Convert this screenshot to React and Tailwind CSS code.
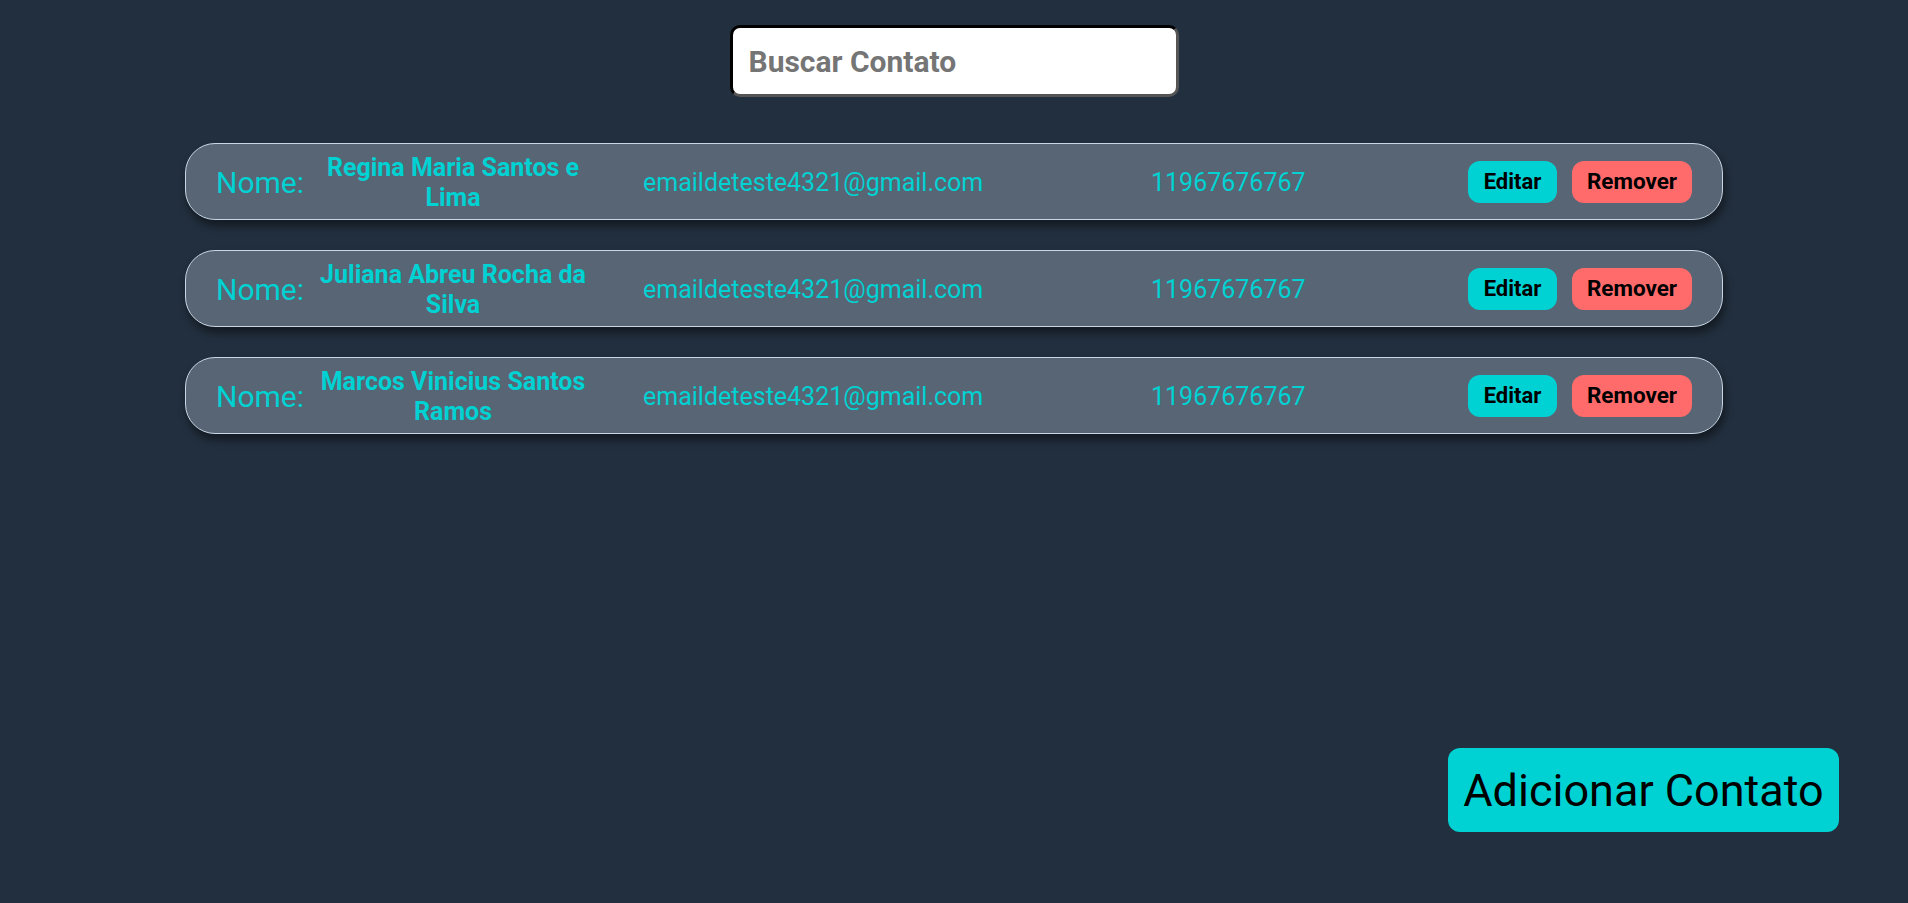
import React from "react";

const contacts = [
  { name: "Regina Maria Santos e Lima", email: "emaildeteste4321@gmail.com", phone: "11967676767" },
  { name: "Juliana Abreu Rocha da Silva", email: "emaildeteste4321@gmail.com", phone: "11967676767" },
  { name: "Marcos Vinicius Santos Ramos", email: "emaildeteste4321@gmail.com", phone: "11967676767" },
];

function ContactCard({ c }) {
  return (
    <div className="w-[1538px] h-[77px] flex items-center pl-[30px] pr-[30px] rounded-[30px] border border-[#c8d6e5] bg-[#576574] shadow-[2px_6px_8px_rgba(0,0,0,0.45)] text-[#00d2d3]">
      <span className="w-[88px] pt-[2px] text-[30px] font-normal leading-none">Nome:</span>
      <span className="w-[298px] pt-[2px] text-center text-[25px] font-bold leading-[30px]">{c.name}</span>
      <span className="ml-[41px] w-[508px] pt-[2px] text-[25px] leading-none">{c.email}</span>
      <span className="pt-[2px] text-[25px] leading-none">{c.phone}</span>
      <div className="ml-auto flex items-center gap-[15px]">
        <button className="w-[89px] h-[42px] rounded-[12px] bg-[#00d2d3] text-black text-[22px] font-bold leading-none flex items-center justify-center">
          Editar
        </button>
        <button className="w-[120px] h-[42px] rounded-[12px] bg-[#ff6b6b] text-black text-[22.5px] font-bold leading-none flex items-center justify-center">
          Remover
        </button>
      </div>
    </div>
  );
}

export default function App() {
  return (
    <div
      className="w-full h-[903px] bg-[#222f3e] flex flex-col items-center overflow-hidden"
      style={{ fontFamily: "Roboto, 'Noto Sans', sans-serif" }}
    >
      <input
        type="text"
        placeholder="Buscar Contato"
        className="mt-[25px] w-[449px] h-[72px] rounded-[10px] border-[3px] border-t-black border-l-black border-r-[#555555] border-b-[#555555] bg-white pl-[16px] text-[30px] font-bold text-[#333] placeholder:text-[#757575] outline-none"
      />
      <div className="mt-[46px] flex flex-col gap-[30px]">
        {contacts.map((c, i) => (
          <ContactCard key={i} c={c} />
        ))}
      </div>
      <div className="mt-auto w-full flex justify-end pr-[69px] pb-[71px]">
        <button className="w-[391px] h-[84px] rounded-[12px] bg-[#00d2d3] text-black text-[45px] leading-none flex items-center justify-center">
          Adicionar Contato
        </button>
      </div>
    </div>
  );
}
